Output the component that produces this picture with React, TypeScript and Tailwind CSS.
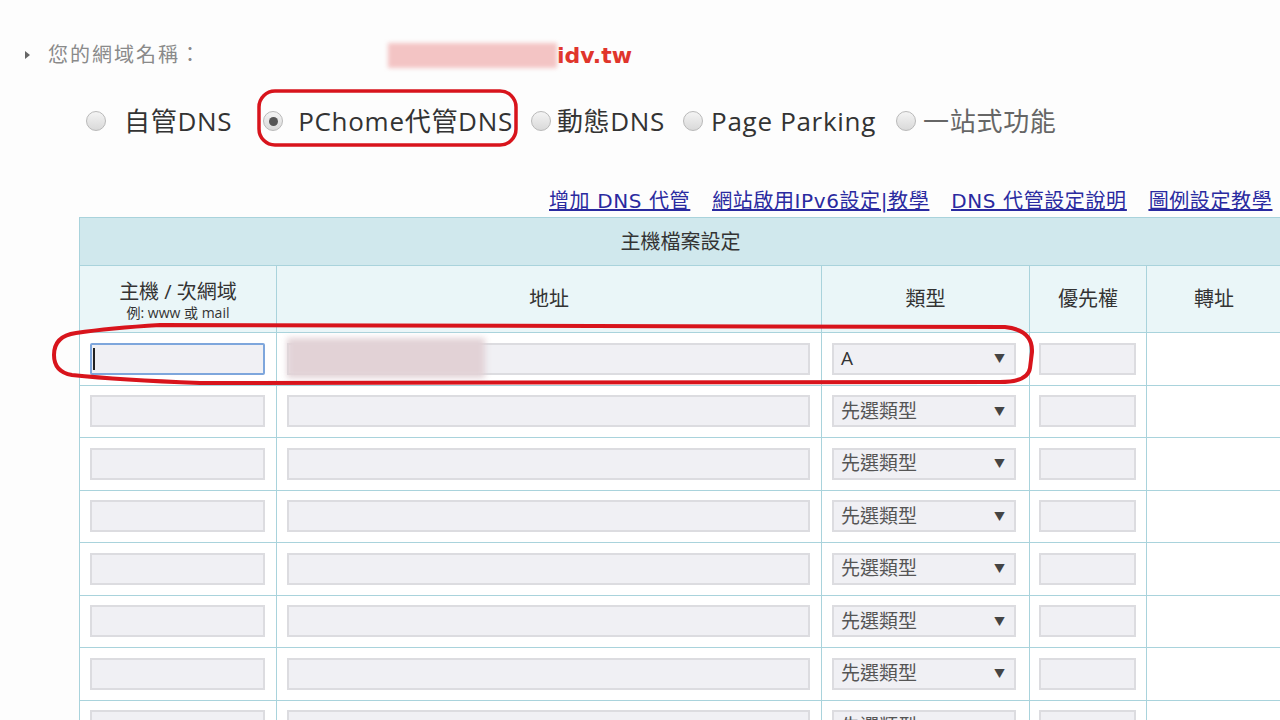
import React from 'react'

const rows = Array.from({ length: 8 }, (_, i) => i)

function Radio({ checked, className = '' }: { checked?: boolean; className?: string }) {
  return (
    <span
      className={`flex shrink-0 items-center justify-center w-[20px] h-[20px] rounded-full border border-[#b9b9b9] bg-gradient-to-b from-[#f4f4f4] to-[#d9d9d9] ${className}`}
    >
      {checked && <span className="w-[9px] h-[9px] rounded-full bg-[#555]" />}
    </span>
  )
}

function Field({ w, focused }: { w: string; focused?: boolean }) {
  return (
    <div
      className={`${w} h-[32px] bg-[#f0f0f4] flex items-center ${
        focused ? 'border-2 border-[#7ea6dc] rounded-[2px]' : 'border-2 border-[#dcdce0]'
      }`}
    >
      {focused && <span className="ml-[1px] w-[2px] h-[22px] bg-[#222]" />}
    </div>
  )
}

function Select({ value, dark }: { value: string; dark?: boolean }) {
  return (
    <div className="w-[184px] h-[32px] bg-[#f0f0f4] border-2 border-[#dcdce0] flex items-center justify-between pl-[7px] pr-[9px]">
      <span className={`text-[19px] leading-none ${dark ? 'text-[#333]' : 'text-[#555]'}`}>{value}</span>
      <span className="text-[11px] text-[#444] leading-none">▼</span>
    </div>
  )
}

export default function App() {
  return (
    <div className="relative w-[1280px] h-[720px] overflow-hidden bg-[#fdfdfd] font-['Open_Sans','Noto_Sans_CJK_TC',sans-serif]">
      {/* domain line */}
      <div className="mt-[40px] h-[30px] flex items-center pl-[25px]">
        <span className="w-0 h-0 border-y-[4px] border-y-transparent border-l-[5px] border-l-[#666]" />
        <span className="ml-[18px] text-[20px] tracking-[2px] text-[#8a8a8a]">您的網域名稱：</span>
        <span className="ml-[186px] w-[169px] h-[25px] bg-[#f3c4c4] blur-[2px]" />
        <span className="font-['DejaVu_Sans',sans-serif] font-bold text-[22px] text-[#e0352b]">idv.tw</span>
      </div>

      {/* dns mode radios */}
      <div className="mt-[23px] h-[56px] flex items-center pl-[86px] text-[26px] tracking-[0.7px] text-[#333]">
        <Radio />
        <span className="ml-[18px]">自管DNS</span>
        <Radio checked className="ml-[31px]" />
        <span className="ml-[15px]">PChome代管DNS</span>
        <Radio className="ml-[18px]" />
        <span className="ml-[6px]">動態DNS</span>
        <Radio className="ml-[18px]" />
        <span className="ml-[8px]">Page Parking</span>
        <Radio className="ml-[20px]" />
        <span className="ml-[7px] text-[#666]">一站式功能</span>
      </div>

      {/* links */}
      <div className="mt-[40px] h-[24px] flex items-center pl-[549px] gap-[22px] whitespace-nowrap text-[20px] tracking-[0.6px] text-[#2a2aa0] underline font-['DejaVu_Sans','Noto_Sans_CJK_TC',sans-serif]">
        <a>增加 DNS 代管</a>
        <a>網站啟用IPv6設定|教學</a>
        <a>DNS 代管設定說明</a>
        <a>圖例設定教學</a>
      </div>

      {/* host table */}
      <table className="mt-[4px] ml-[79px] w-[1202px] table-fixed border-collapse text-[#333]">
        <colgroup>
          <col className="w-[197px]" />
          <col className="w-[545px]" />
          <col className="w-[208px]" />
          <col className="w-[117px]" />
          <col className="w-[135px]" />
        </colgroup>
        <thead>
          <tr className="h-[48px] bg-[#d0e8ed]">
            <th colSpan={5} className="border border-[#a9d3dc] font-normal text-[20px]">主機檔案設定</th>
          </tr>
          <tr className="h-[67px] bg-[#eaf6f8] font-normal">
            <th className="border border-[#a9d3dc] font-normal leading-none pt-[4px]">
              <div className="text-[20px] leading-[22px]">主機 / 次網域</div>
              <div className="text-[14px] leading-[16px] mt-[2px]">例: www 或 mail</div>
            </th>
            <th className="border border-[#a9d3dc] font-normal text-[20px]">地址</th>
            <th className="border border-[#a9d3dc] font-normal text-[20px]">類型</th>
            <th className="border border-[#a9d3dc] font-normal text-[20px]">優先權</th>
            <th className="border border-[#a9d3dc] font-normal text-[20px]">轉址</th>
          </tr>
        </thead>
        <tbody className="bg-white">
          {rows.map((i) => (
            <tr key={i} className="h-[52.5px]">
              <td className="border border-[#a9d3dc] pl-[10px]">
                <Field w="w-[175px]" focused={i === 0} />
              </td>
              <td className="border border-[#a9d3dc] pl-[10px]">
                <div className="relative">
                  <Field w="w-[523px]" />
                  {i === 0 && (
                    <div className="absolute left-0 top-[-5px] w-[198px] h-[40px] bg-[#e2d2d6] blur-[3px]" />
                  )}
                </div>
              </td>
              <td className="border border-[#a9d3dc] pl-[10px]">
                <Select value={i === 0 ? 'A' : '先選類型'} dark={i === 0} />
              </td>
              <td className="border border-[#a9d3dc] pl-[9px]">
                <Field w="w-[97px]" />
              </td>
              <td className="border border-[#a9d3dc]" />
            </tr>
          ))}
        </tbody>
      </table>

      {/* red annotations */}
      <svg className="absolute inset-0 pointer-events-none" width="1280" height="720">
        <rect x="259" y="91" width="257" height="54" rx="16" fill="none" stroke="#d8141c" strokeWidth="3.5" />
        <path
          d="M 160 325 L 1005 327 Q 1033 330 1032 352 L 1030 368 Q 1028 382 1000 382 L 200 383 Q 120 380 72 375 Q 54 372 54 355 Q 54 336 76 333 Q 110 328 160 325 Z"
          fill="none"
          stroke="#d8141c"
          strokeWidth="4"
        />
      </svg>
    </div>
  )
}
